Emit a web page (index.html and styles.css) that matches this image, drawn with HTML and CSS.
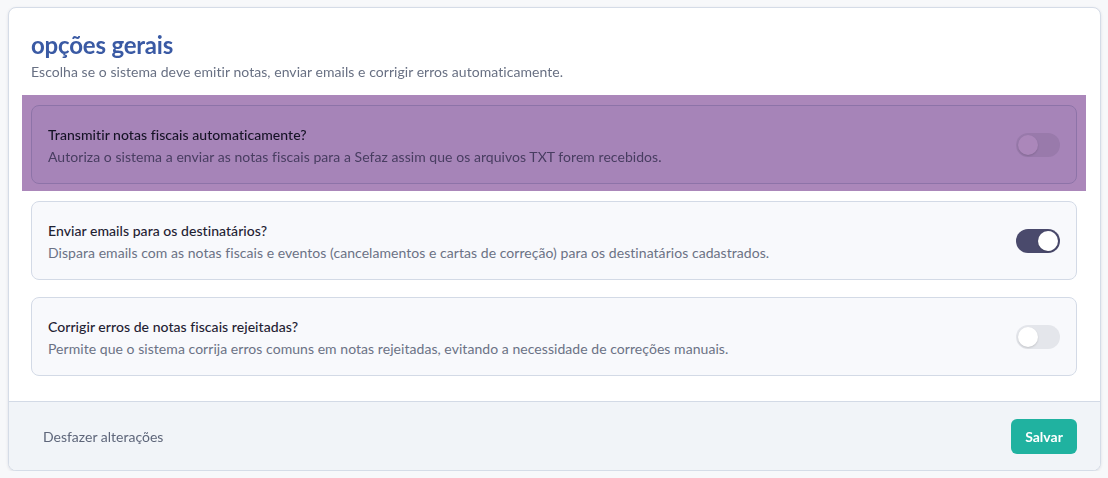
FILE: index.html
```html
<!DOCTYPE html>
<html lang="pt-BR">
<head>
<meta charset="utf-8">
<title>opções gerais</title>
<link rel="stylesheet" href="styles.css">
</head>
<body>
<section class="panel">
  <div class="panel-body">
    <h2 class="panel-title">opções gerais</h2>
    <p class="panel-sub">Escolha se o sistema deve emitir notas, enviar emails e corrigir erros automaticamente.</p>
    <div class="options">
      <div class="option highlighted">
        <div class="option-text">
          <div class="option-title">Transmitir notas fiscais automaticamente?</div>
          <div class="option-desc">Autoriza o sistema a enviar as notas fiscais para a Sefaz assim que os arquivos TXT forem recebidos.</div>
        </div>
        <span class="toggle"><span class="knob"></span></span>
        <div class="spotlight"></div>
      </div>
      <div class="option">
        <div class="option-text">
          <div class="option-title">Enviar emails para os destinatários?</div>
          <div class="option-desc">Dispara emails com as notas fiscais e eventos (cancelamentos e cartas de correção) para os destinatários cadastrados.</div>
        </div>
        <span class="toggle on"><span class="knob"></span></span>
      </div>
      <div class="option">
        <div class="option-text">
          <div class="option-title">Corrigir erros de notas fiscais rejeitadas?</div>
          <div class="option-desc">Permite que o sistema corrija erros comuns em notas rejeitadas, evitando a necessidade de correções manuais.</div>
        </div>
        <span class="toggle"><span class="knob"></span></span>
      </div>
    </div>
  </div>
  <footer class="panel-footer">
    <button class="btn-link">Desfazer alterações</button>
    <button class="btn-save">Salvar</button>
  </footer>
</section>
</body>
</html>
```

FILE: styles.css
```css
* { box-sizing: border-box; }
html, body { margin: 0; }
body {
  background: #f7f8fa;
  padding: 7px 7px 0 8px;
  font-family: Lato, "Noto Sans", sans-serif;
  color: #1f2233;
}
.panel {
  background: #fff;
  border: 1px solid #d5dce7;
  border-radius: 8px;
  box-shadow: 0 1px 3px rgba(30, 40, 70, 0.12);
  overflow: hidden;
}
.panel-body {
  padding: 23px 23px 25px 22px;
}
.panel-title {
  margin: 0;
  font-size: 24px;
  font-weight: 700;
  color: #3a5aa4;
  line-height: 28px;
  letter-spacing: -0.2px;
}
.panel-sub {
  margin: 4px 0 0;
  font-size: 14px;
  line-height: 18px;
  color: #687083;
  letter-spacing: 0.05px;
}
.options {
  margin-top: 24px;
  display: flex;
  flex-direction: column;
  gap: 17px;
}
.option {
  position: relative;
  display: flex;
  align-items: center;
  justify-content: space-between;
  background: #f8f9fc;
  border: 1px solid #d3dae6;
  border-radius: 8px;
  padding: 0 16px;
  height: 79px;
}
.option-text {
  display: flex;
  flex-direction: column;
  gap: 4px;
  padding-top: 3px;
}
.option-title {
  font-size: 14px;
  font-weight: 500;
  color: #1f2233;
  line-height: 18px;
  letter-spacing: 0.05px;
}
.option-desc {
  font-size: 14px;
  color: #6b7285;
  line-height: 18px;
  letter-spacing: 0.05px;
}
.toggle {
  position: relative;
  width: 44px;
  height: 24px;
  border-radius: 12px;
  background: #e4e6eb;
  flex: none;
  display: flex;
  align-items: center;
  padding: 2px;
}
.toggle .knob {
  width: 20px;
  height: 20px;
  border-radius: 50%;
  background: #fff;
  box-shadow: 0 1px 2px rgba(0, 0, 0, 0.15);
}
.toggle.on {
  background: #4a4a6c;
  justify-content: flex-end;
}
.spotlight {
  position: absolute;
  top: -11px;
  left: -10px;
  right: -10px;
  bottom: -8px;
  background: #ab87ba;
  mix-blend-mode: multiply;
  pointer-events: none;
}
.panel-footer {
  display: flex;
  align-items: center;
  justify-content: space-between;
  background: #f1f4f8;
  border-top: 1px solid #d3dae6;
  padding: 16px 23px 16px 22px;
  height: 69px;
}
.btn-link {
  border: 0;
  background: none;
  font: inherit;
  font-size: 14px;
  color: #5e667a;
  padding: 8px 12px;
  cursor: pointer;
}
.btn-save {
  border: 0;
  background: #20b2a0;
  color: #fff;
  font: inherit;
  font-size: 14px;
  font-weight: 700;
  width: 66px;
  height: 35px;
  border-radius: 6px;
  cursor: pointer;
}
```
